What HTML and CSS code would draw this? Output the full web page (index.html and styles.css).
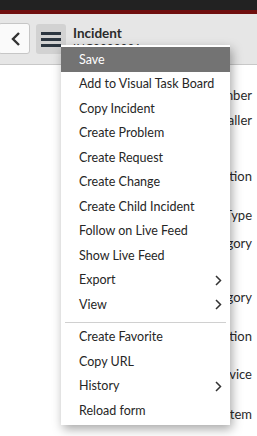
FILE: index.html
```html
<!DOCTYPE html>
<html lang="en">
<head>
  <meta charset="UTF-8" />
  <meta name="viewport" content="width=device-width, initial-scale=1.0"/>
  <title>Incident</title>
  <link rel="stylesheet" href="styles.css">
</head>
<body>
  <div class="topbar"></div>
  <div class="redline"></div>

  <div class="header">
    <button class="back-btn" type="button">
      <svg width="10" height="14" viewBox="0 0 10 14"><path d="M8 1 L2 7 L8 13" fill="none" stroke="#333" stroke-width="2.4"/></svg>
    </button>
    <button class="menu-btn" type="button">
      <span></span><span></span><span></span>
    </button>
    <div class="title">
      <h1>Incident</h1>
      <p>INC0000001</p>
    </div>
  </div>

  <!-- form labels behind the context menu -->
  <div class="form">
    <div class="field f25">Number</div>
    <div class="field f56">Caller</div>
    <div class="field f39">Location</div>
    <div class="field f28">Type</div>
    <div class="field f54">Category</div>
    <div class="field f39">Subcategory</div>
    <div class="field f38">Location</div>
    <div class="field f40">Service</div>
    <div class="field f25">Item</div>
  </div>

  <div class="context-menu">
    <div class="item active">Save</div>
    <div class="item">Add to Visual Task Board</div>
    <div class="item">Copy Incident</div>
    <div class="item">Create Problem</div>
    <div class="item">Create Request</div>
    <div class="item">Create Change</div>
    <div class="item">Create Child Incident</div>
    <div class="item">Follow on Live Feed</div>
    <div class="item">Show Live Feed</div>
    <div class="item sub">Export
      <svg width="7" height="11" viewBox="0 0 7 11"><path d="M1 1 L5.5 5.5 L1 10" fill="none" stroke="#333" stroke-width="1.5"/></svg>
    </div>
    <div class="item sub">View
      <svg width="7" height="11" viewBox="0 0 7 11"><path d="M1 1 L5.5 5.5 L1 10" fill="none" stroke="#333" stroke-width="1.5"/></svg>
    </div>
    <div class="separator"></div>
    <div class="item">Create Favorite</div>
    <div class="item">Copy URL</div>
    <div class="item sub">History
      <svg width="7" height="11" viewBox="0 0 7 11"><path d="M1 1 L5.5 5.5 L1 10" fill="none" stroke="#333" stroke-width="1.5"/></svg>
    </div>
    <div class="item">Reload form</div>
  </div>
</body>
</html>
```

FILE: styles.css
```css
* {
  margin: 0;
  padding: 0;
  box-sizing: border-box;
}

body {
  font-family: 'Lato', 'Open Sans', sans-serif;
  background: #fff;
  color: #333;
  width: 257px;
  height: 436px;
  overflow: hidden;
  position: relative;
}

.topbar {
  height: 10px;
  background: #222;
}

.redline {
  height: 4px;
  background: #6f0e0e;
}

.header {
  height: 51px;
  background: #e6e6e6;
  border-bottom: 1px solid #c8c8c8;
  display: flex;
  align-items: flex-start;
  padding-top: 9px;
}

.back-btn {
  width: 32px;
  height: 31px;
  margin-left: -2px;
  background: #fafafa;
  border: 1px solid #c6c6c6;
  border-radius: 3px;
  display: flex;
  align-items: center;
  justify-content: center;
  padding-left: 3px;
}

.menu-btn {
  width: 30px;
  height: 30px;
  margin-left: 6px;
  margin-top: 1px;
  background: #d2d2d2;
  border: none;
  border-radius: 3px;
  display: flex;
  flex-direction: column;
  align-items: center;
  justify-content: center;
  gap: 3px;
}

.menu-btn span {
  display: block;
  width: 20px;
  height: 3px;
  background: #2c3640;
}

.title {
  margin-left: 7px;
  margin-top: 2px;
}

.title h1 {
  font-size: 13.5px;
  font-weight: 700;
  color: #2b2b2b;
  line-height: 16px;
}

.title p {
  font-size: 11px;
  color: #333;
  line-height: 13px;
  letter-spacing: 0.5px;
}

.form {
  padding-top: 20px;
}

.field {
  line-height: 20px;
  font-size: 13px;
  text-align: right;
  padding-right: 5px;
  white-space: nowrap;
  color: #2a2a2a;
}

.f25 { height: 25px; }
.f28 { height: 28px; }
.f38 { height: 38px; }
.f39 { height: 39px; }
.f40 { height: 40px; }
.f54 { height: 54px; }
.f56 { height: 56px; }

.context-menu {
  position: absolute;
  left: 61px;
  top: 45px;
  width: 169px;
  background: #fff;
  padding: 2px 0 2px;
  box-shadow: 2px 4px 10px rgba(0, 0, 0, 0.35);
}

.item {
  height: 24.5px;
  line-height: 24.5px;
  padding-left: 18px;
  padding-right: 8px;
  padding-top: 1px;
  font-size: 12.5px;
  color: #262626;
  display: flex;
  align-items: center;
  justify-content: space-between;
}

.item.active {
  background: #737373;
  color: #fff;
}

.separator {
  height: 1px;
  background: #d0d0d0;
  margin: 5px 4px 2px;
}
```
